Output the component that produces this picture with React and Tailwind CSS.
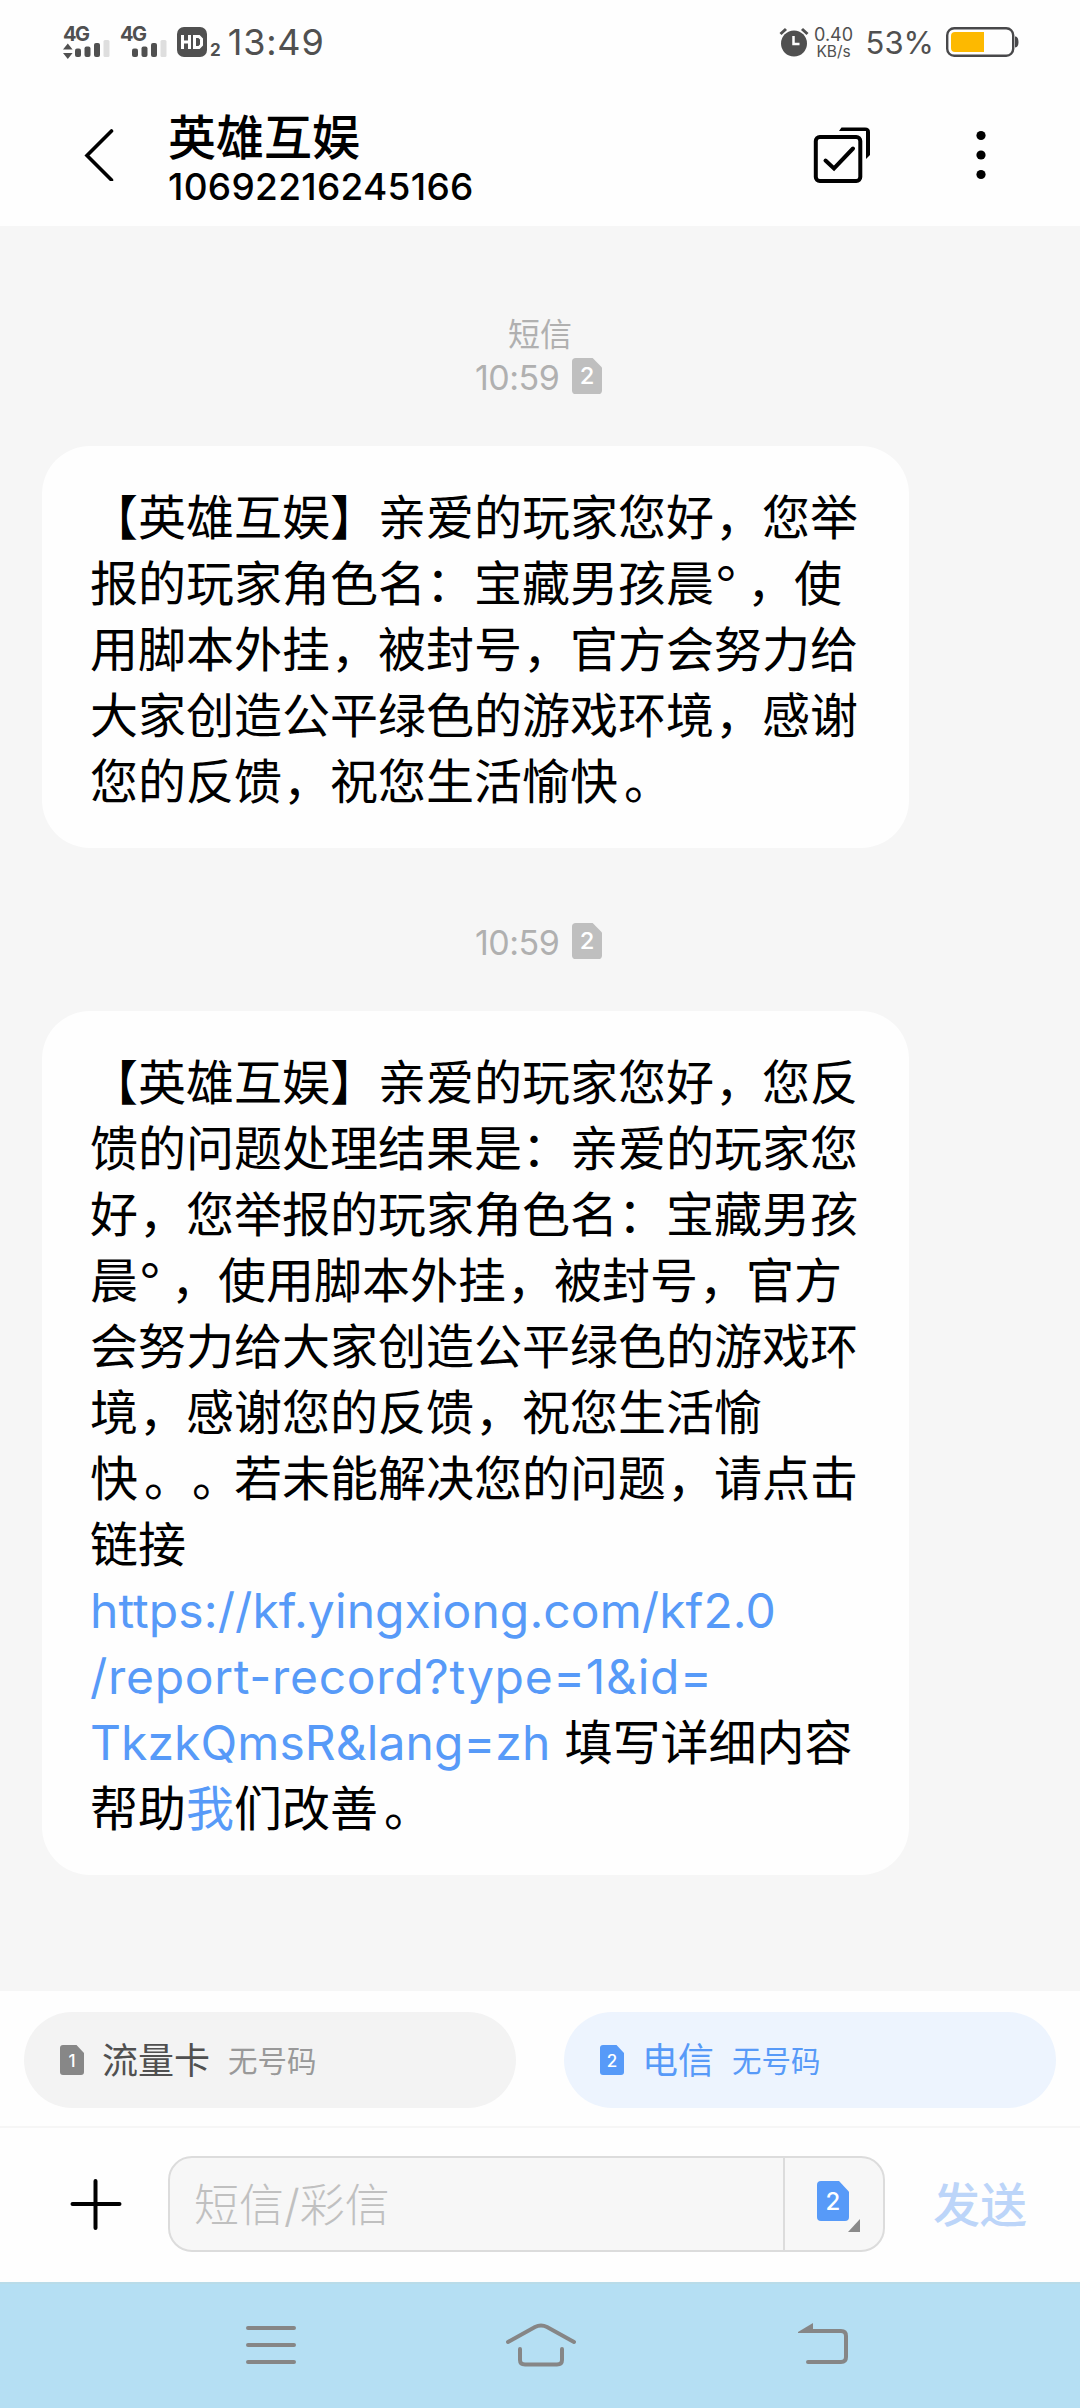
import clsx from 'clsx';

const MESSAGES = [
  {
    id: 1,
    label: '短信',
    time: '10:59',
    lines: [
      '【英雄互娱】亲爱的玩家您好，您举',
      '报的玩家角色名：宝藏男孩晨°，使',
      '用脚本外挂，被封号，官方会努力给',
      '大家创造公平绿色的游戏环境，感谢',
      '您的反馈，祝您生活愉快。',
    ],
  },
  {
    id: 2,
    time: '10:59',
    lines: [
      '【英雄互娱】亲爱的玩家您好，您反',
      '馈的问题处理结果是：亲爱的玩家您',
      '好，您举报的玩家角色名：宝藏男孩',
      '晨°，使用脚本外挂，被封号，官方',
      '会努力给大家创造公平绿色的游戏环',
      '境，感谢您的反馈，祝您生活愉',
      '快。。若未能解决您的问题，请点击',
      '链接',
      <Link key="a">https://kf.yingxiong.com/kf2.0</Link>,
      <Link key="b" className="tracking-[0.7px]">/report-record?type=1&id=</Link>,
      <><Link>TkzkQmsR&lang=zh</Link><span className="ml-[14px]">填写详细内容</span></>,
      <>帮助<span className="text-[#579af8]">我</span><Text>们改善。</Text></>,
    ],
  },
];

// widths and insets of the marks that do not sit on the plain 48px cell
const MARKS = {
  '，': "w-12 pl-[1px] [font-feature-settings:'halt']",
  '。': "w-12 pl-[6px] [font-feature-settings:'halt']",
  '°': 'w-8 pl-px font-light',
};

function Text({ children }) {
  return children.split(/([，。°])/).map((part, i) =>
    MARKS[part] ? <span key={i} className={clsx('inline-block', MARKS[part])}>{part}</span> : part
  );
}

function Link({ children, className = 'tracking-[0.08px]' }) {
  return <a className={clsx('text-[#579af8]', className)}>{children}</a>;
}

function SimIcon({ n, size = 17, className }) {
  return (
    <svg viewBox="0 0 24 30" preserveAspectRatio="none" className={className}>
      <path d="M3 0H16.5L24 8V27A3 3 0 0 1 21 30H3A3 3 0 0 1 0 27V3A3 3 0 0 1 3 0Z" fill="currentColor" />
      <text x="12" y="22" textAnchor="middle" fontSize={size} fontWeight="500" fill="#fff">{n}</text>
    </svg>
  );
}

function Signal({ arrows, className }) {
  return (
    <div className={clsx('relative h-[34px] w-[48px]', className)}>
      <span className="absolute top-[2px] left-0 text-[20px] leading-[14px] font-bold tracking-[-1.5px]">4G</span>
      <svg viewBox="0 0 48 34" className="h-[34px] w-[48px]" fill="currentColor">
        {arrows && <path d="M0 24.500L4.800 18.500L9.600 24.500ZM0 28L4.800 34L9.600 28Z" />}
        <rect x="12" y="23.500" width="6" height="8.500" rx="2" />
        <rect x="21.500" y="21.500" width="6" height="10.500" rx="2" />
        <rect x="31" y="18" width="6" height="14" rx="2" />
        <rect x="40.500" y="15" width="6" height="17" rx="1.500" fill="#dedede" />
      </svg>
    </div>
  );
}

function StatusBar() {
  return (
    <div className="flex h-[84px] items-center pl-[63px] pr-[61px] text-[#505050]">
      <Signal arrows />
      <Signal className="ml-[9px]" />
      <div className="ml-[9px] flex h-[30px] w-[30px] items-center justify-center rounded-[7px] bg-[#505050]">
        <svg viewBox="0 0 24 14" className="h-[14px] w-[24px]" fill="none" stroke="#fff" strokeWidth="3">
          <path d="M2.500 0V14M9.500 0V14M2.500 7H9.500M14.500 1.500H19L21.500 4V10L19 12.500H14.500Z" />
        </svg>
      </div>
      <span className="mt-[15px] ml-[3px] text-[17px] leading-4 font-bold">2</span>
      <span className="ml-[7px] text-[36px] leading-[44px] tracking-[0.8px]">13:49</span>
      <div className="ml-auto flex items-center">
        <svg viewBox="0 0 30 30" className="h-[30px] w-[30px]" fill="none">
          <circle cx="15" cy="16.500" r="13" fill="#505050" />
          <path d="M1.500 7L7 2M28.500 7L23 2" stroke="#505050" strokeWidth="3" />
          <path d="M14.500 9V17H20.500" stroke="#fff" strokeWidth="2.500" />
        </svg>
        <div className="ml-[5px] flex w-[40px] flex-col items-center">
          <span className="text-[18px] leading-[18px]">0.40</span>
          <span className="text-[15.500px] leading-[15px]">KB/s</span>
        </div>
        <span className="ml-[12px] pt-[2px] text-[31px] leading-[40px]">53%</span>
        <svg viewBox="0 0 73 30" className="ml-[12px] h-[30px] w-[73px]" fill="none">
          <rect x="1.200" y="1.200" width="66" height="27.600" rx="7" stroke="#48484a" strokeWidth="2.400" />
          <rect x="5" y="5" width="33" height="20" rx="4" fill="#fdb900" />
          <rect x="30" y="5" width="8" height="20" fill="#fdb900" />
          <path d="M69 9.500C71 9.500 72.500 11 72.500 15S71 20.500 69 20.500Z" fill="#48484a" />
        </svg>
      </div>
    </div>
  );
}

function Header() {
  return (
    <div className="flex h-[142px] items-center pl-[83px]">
      <svg viewBox="0 0 32 52" className="h-[52px] w-[32px]" fill="none" stroke="#000" strokeWidth="3.600" strokeLinecap="round">
        <path d="M28.500 2L4 26.500L28.500 51" />
      </svg>
      <div className="ml-[53px] flex flex-col pt-[9px]">
        <h1 className="text-[48px] leading-[54px] font-medium">英雄互娱</h1>
        <span className="text-[37px] leading-[44px] font-medium tracking-[0.3px]">10692216245166</span>
      </div>
      <svg viewBox="0 0 60 60" className="ml-auto h-[60px] w-[60px]" fill="none" stroke="#000" strokeWidth="4" strokeLinecap="round">
        <rect x="5.800" y="12" width="44.500" height="44" rx="4" />
        <path d="M15.500 35.500L24 43.500L43 23.500" />
        <path d="M29 6L31.500 2.500H55Q60 2.500 60 7V30L56 34V6Z" fill="#000" stroke="none" />
      </svg>
      <svg viewBox="0 0 12 52" className="mr-[93px] ml-[105px] h-[52px] w-[12px]">
        <circle cx="6" cy="6.500" r="4.600" />
        <circle cx="6" cy="26" r="4.600" />
        <circle cx="6" cy="45.500" r="4.600" />
      </svg>
    </div>
  );
}

function Message({ label, time, lines }) {
  return (
    <div className="flex flex-col">
      {label && <div className="h-[40px] pt-px text-center text-[32px] leading-[40px] text-[#b0b0b0]">{label}</div>}
      <div className="flex h-[44px] items-center pl-[475px] text-[#b0b0b0]">
        <span className="w-[97px] pt-[2px] text-[34px] tracking-[-0.5px]">{time}</span>
        <SimIcon n={2} size={19} className="h-[36px] w-[30px] text-[#bfbfbf]" />
      </div>
      <div className="mt-[48px] ml-[42px] w-[867px] rounded-[48px] bg-[#fefefe] pt-[39px] pb-[33px] pl-12 text-[48px] leading-[66px] whitespace-nowrap [text-spacing-trim:space-all]">
        {lines.map((line, i) => (
          <div key={i} className="h-[66px]">
            {typeof line === 'string' ? <Text>{line}</Text> : line}
          </div>
        ))}
      </div>
    </div>
  );
}

function SimTab({ n, name, active }) {
  return (
    <div className={clsx('flex h-24 w-[492px] items-center rounded-full pl-9', active ? 'bg-[#edf4fe] text-[#579af8]' : 'bg-[#f3f3f3] text-[#505050]')}>
      <SimIcon n={n} className={clsx('h-[30px] w-[24px]', !active && 'text-[#878787]')} />
      <span className="ml-[18px] pt-[2px] text-[36px]">{name}</span>
      <span className={clsx('ml-[18px] pt-[2px] text-[29.500px]', !active && 'text-[#999]')}>无号码</span>
    </div>
  );
}

function Composer() {
  return (
    <div className="flex h-[154px] items-center pb-[2px] pl-[70px]">
      <svg viewBox="0 0 52 52" className="h-[52px] w-[52px]" fill="none" stroke="#000" strokeWidth="4" strokeLinecap="round">
        <path d="M25.500 3V50M2.500 26H49.500" />
      </svg>
      <div className="ml-[46px] flex h-24 w-[717px] rounded-[24px] border-2 border-[#dcdcdc] bg-[#f7f7f7]">
        <div className="flex w-[615px] items-center border-r-2 border-[#dcdcdc] pt-[3px] pl-[24px] text-[45px] font-light text-[#c0c0c0]">短信/彩信</div>
        <div className="flex flex-1 pt-[23px] pl-[32px]">
          <SimIcon n={2} size={18} className="h-[40px] w-[32px] text-[#579af8]" />
          <svg viewBox="0 0 12 13" className="mt-[38px] -ml-px h-[13px] w-[12px]">
            <path d="M12 0V13H0Z" fill="#8a8a8a" />
          </svg>
        </div>
      </div>
      <button className="ml-[48px] pt-[2px] text-[47px] font-medium text-[#bcd5f9]">发送</button>
    </div>
  );
}

function NavBar() {
  return (
    <div className="flex h-[126px] items-center border-t-2 border-[#b9dce9] bg-[#b5dff3] pl-[244px]">
      <svg viewBox="0 0 54 50" className="h-[50px] w-[54px]" fill="none" stroke="#868686" strokeWidth="4" strokeLinecap="round">
        <path d="M4 7H50M4 24H50M4 41H50" />
      </svg>
      <svg viewBox="0 0 74 50" className="ml-[206px] h-[50px] w-[74px]" fill="none" stroke="#868686" strokeWidth="4" strokeLinecap="round">
        <path d="M4 21L31 6Q37 3 43 6L70 21" />
        <path d="M16 28V39Q16 43.500 21 43.500H53Q58 43.500 58 39V28" />
      </svg>
      <svg viewBox="0 0 56 50" className="ml-[217px] h-[50px] w-[56px]" fill="none" stroke="#868686" strokeWidth="4" strokeLinecap="round">
        <path d="M10 10H46Q51 10 51 15V36Q51 41 46 41H13" />
        <path d="M3 11L18 2V12H3Z" fill="#868686" stroke="none" />
      </svg>
    </div>
  );
}

export default function App() {
  return (
    <div className="flex h-[2408px] w-[1080px] flex-col bg-[#fefefe] font-[Inter,'Noto_Sans_CJK_SC',sans-serif] text-black">
      <StatusBar />
      <Header />
      <div className="flex h-[1765px] flex-col gap-[71px] bg-[#f6f6f6] pt-[88px]">
        {MESSAGES.map((m) => (
          <Message key={m.id} {...m} />
        ))}
      </div>
      <div className="flex h-[137px] items-start justify-between border-b-2 border-[#f6f6f6] px-6 pt-[21px]">
        <SimTab n={1} name="流量卡" />
        <SimTab n={2} name="电信" active />
      </div>
      <Composer />
      <NavBar />
    </div>
  );
}
